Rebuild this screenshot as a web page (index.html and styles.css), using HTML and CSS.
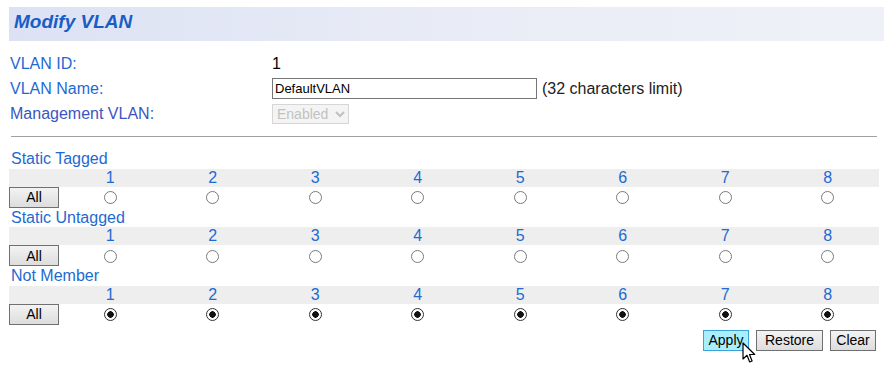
FILE: index.html
```html
<!DOCTYPE html>
<html lang="en">

<head>
    <meta charset="UTF-8"/>
    <title>Modify VLAN</title>
    <link rel="stylesheet" href="styles.css">
</head>

<body>
<div class="page">
    <div class="title-bar">
        <h2>Modify VLAN</h2>
    </div>

    <form action="" class="info">
        <div class="row">
            <span class="label">VLAN ID:</span>
            <span class="value">1</span>
        </div>
        <div class="row">
            <span class="label">VLAN Name:</span>
            <span class="value">
                <input type="text" class="vname" value="DefaultVLAN"/>
                <span class="hint">(32 characters limit)</span>
            </span>
        </div>
        <div class="row">
            <span class="label mgmt">Management VLAN:</span>
            <span class="value">
                <select class="mvlan" disabled>
                    <option>Enabled</option>
                </select>
            </span>
        </div>
    </form>

    <hr class="line"/>

    <div class="ports" id="ports"></div>

    <div class="actions">
        <button class="btn apply">Apply</button>
        <button class="btn restore">Restore</button>
        <button class="btn clear">Clear</button>
    </div>

    <svg class="cursor" width="14" height="22" viewBox="0 0 14 22">
        <path d="M1 1 L1 17 L5 13.3 L7.7 20 L10.1 19 L7.5 12.5 L12.7 12.5 Z" fill="#fff" stroke="#000" stroke-width="1.2" stroke-linejoin="round"/>
    </svg>
</div>

<script>
    const groups = [
        {name: 'Static Tagged', checked: false},
        {name: 'Static Untagged', checked: false},
        {name: 'Not Member', checked: true}
    ]
    const ports = document.querySelector('#ports')

    // 渲染端口表
    function render() {
        let str = ''
        groups.forEach(function (g, gi) {
            let nums = '<td class="first"></td>'
            let radios = '<td class="first"><button type="button" class="btn all">All</button></td>'
            for (let i = 1; i <= 8; i++) {
                nums += `<td>${i}</td>`
                radios += `<td><input type="radio" name="p${i}_${gi}" ${g.checked ? 'checked' : ''}/></td>`
            }
            str += `
            <div class="group-name">${g.name}</div>
            <table class="grid">
                <tr class="nums">${nums}</tr>
                <tr class="radios">${radios}</tr>
            </table>
            `
        })
        ports.innerHTML = str
    }
    render()
</script>
</body>

</html>
```

FILE: styles.css
```css
* {
    margin: 0;
    padding: 0;
    box-sizing: border-box;
}

body {
    font-family: "Liberation Sans", Arial, sans-serif;
    font-size: 16px;
    color: #000;
    background: #fff;
}

.page {
    position: relative;
    width: 892px;
    min-height: 372px;
    padding: 7px 8px 0 9px;
}

.title-bar {
    height: 34px;
    background: linear-gradient(to right, #dce2f4, #e9ecf6 50%, #eff1f8);
    padding-left: 5px;
}

.title-bar h2 {
    font-size: 19px;
    line-height: 30px;
    font-style: italic;
    font-weight: bold;
    color: #1a5cc6;
}

.info {
    margin-top: 10px;
    padding-left: 1px;
}

.row {
    display: grid;
    grid-template-columns: 262px 1fr;
    height: 25px;
    align-items: center;
}

.label {
    color: #1d6ad2;
}

.label.mgmt {
    color: #3b55c2;
}

.value {
    display: flex;
    align-items: center;
    gap: 5px;
}

.vname {
    width: 265px;
    height: 21px;
    border: 1px solid #767676;
    padding-left: 2px;
    font-family: "Liberation Sans", Arial, sans-serif;
    font-size: 13px;
    color: #000;
    outline: none;
}

.hint {
    color: #222;
}

.mvlan {
    width: 77px;
    height: 20px;
    font-family: "Liberation Sans", Arial, sans-serif;
    font-size: 14px;
    color: #a8a8a8;
    background: #f0f0f0;
    border: 1px solid #c6c6c6;
}

.line {
    border: 0;
    border-top: 1px solid #a0a0a0;
    margin: 10px 7px 12px 2px;
}

.group-name {
    height: 19.5px;
    line-height: 19px;
    padding-left: 2px;
    color: #1d6ad2;
}

.grid {
    width: 870px;
    border-collapse: collapse;
    table-layout: fixed;
}

.grid td {
    text-align: center;
    padding: 0;
}

.grid .first {
    width: 50px;
}

.nums td {
    height: 18px;
    line-height: 18px;
    background: #eeeeee;
    color: #1d6ad2;
}

.radios td {
    height: 21px;
}

.radios input {
    appearance: none;
    width: 13px;
    height: 13px;
    border: 1px solid #7a7a7a;
    border-radius: 50%;
    background: #fff;
    vertical-align: middle;
}

.radios input:checked {
    border-color: #333;
    background: radial-gradient(circle, #111 0, #111 3px, #fff 3.5px);
}

.btn {
    height: 21px;
    padding: 0;
    font-family: "Liberation Sans", Arial, sans-serif;
    font-size: 14px;
    color: #000;
    background: linear-gradient(#f3f3f3, #dddddd);
    border: 1px solid #707070;
    cursor: pointer;
}

.btn.all {
    display: block;
    width: 50px;
}

.actions {
    display: flex;
    justify-content: flex-end;
    gap: 7px;
    width: 870px;
    padding-right: 3px;
    margin-top: 5px;
}

.btn.apply {
    width: 46px;
    background: #a9eefc;
    border-color: #3ca2da;
}

.btn.restore {
    width: 67px;
}

.btn.clear {
    width: 46px;
}

.cursor {
    position: absolute;
    z-index: 10;
    left: 742px;
    top: 342px;
}
```
